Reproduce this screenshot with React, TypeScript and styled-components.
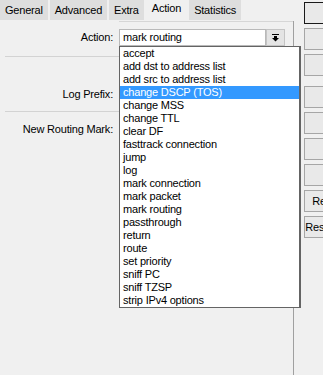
import React from 'react'
import styled, { createGlobalStyle } from 'styled-components'

const tabs = ['General', 'Advanced', 'Extra', 'Action', 'Statistics']
const activeTab = 'Action'

const actions = [
  'accept',
  'add dst to address list',
  'add src to address list',
  'change DSCP (TOS)',
  'change MSS',
  'change TTL',
  'clear DF',
  'fasttrack connection',
  'jump',
  'log',
  'mark connection',
  'mark packet',
  'mark routing',
  'passthrough',
  'return',
  'route',
  'set priority',
  'sniff PC',
  'sniff TZSP',
  'strip IPv4 options',
]
const hovered = 3

const buttons = [
  { label: 'OK', primary: true },
  { label: 'Cancel' },
  { label: 'Apply' },
  { label: 'Disable', spaced: true },
  { label: 'Comment' },
  { label: 'Copy' },
  { label: 'Remove' },
  { label: 'Reset Counters' },
  { label: 'Reset All Counters' },
]

const GlobalStyle = createGlobalStyle`
  html, body {
    margin: 0;
    padding: 0;
    background: #f0f0f0;
  }
  body {
    font-family: "Liberation Sans", Arial, sans-serif;
    font-size: 11px;
    letter-spacing: -0.2px;
    color: #000;
  }
`

const Window = styled.div`
  display: flex;
  width: 323px;
  height: 375px;
  overflow: hidden;
  background: #f0f0f0;
`

const Main = styled.div`
  display: flex;
  flex-direction: column;
  width: 294px;
  flex-shrink: 0;
`

const TabBar = styled.div`
  display: flex;
  gap: 2px;
  height: 20px;
`

const Tab = styled.div<{ $active?: boolean }>`
  display: flex;
  align-items: center;
  padding: ${p => (p.$active ? '0 6px 4px' : '0 5px')};
  background: ${p => (p.$active ? '#f0f0f0' : '#dedede')};
  white-space: nowrap;
`

const FormPanel = styled.div`
  flex: 1;
  margin-top: 1px;
  border-right: 1px solid #a0a0a0;
  display: flex;
  flex-direction: column;
`

const FieldRow = styled.div<{ $top: number }>`
  display: grid;
  grid-template-columns: 119px 1fr;
  align-items: end;
  margin-top: ${p => p.$top}px;
`

const Label = styled.div`
  height: 17px;
  line-height: 17px;
  text-align: right;
  padding-right: 6px;
  white-space: nowrap;
`

const ValueFrame = styled.div`
  border-top: 1px solid #d6d6d6;
  padding-top: 7px;
`

const Separator = styled.div<{ $top: number }>`
  margin: ${p => p.$top}px 0 0 5px;
  height: 1px;
  background: #d3d3d3;
`

const Combo = styled.div`
  position: relative;
  display: flex;
  height: 17px;
`

const ComboInput = styled.div`
  box-sizing: border-box;
  width: 147px;
  height: 17px;
  line-height: 15px;
  padding-left: 3px;
  background: #fff;
  border: 1px solid #b9b9b9;
  white-space: nowrap;
`

const ComboButton = styled.div`
  box-sizing: border-box;
  width: 19px;
  height: 17px;
  display: flex;
  align-items: center;
  justify-content: center;
  background: #e4e4e4;
  border: 1px solid #c4c4c4;
`

const TextInput = styled.div`
  box-sizing: border-box;
  width: 166px;
  height: 17px;
  background: #fff;
  border: 1px solid #b9b9b9;
`

const CheckLine = styled.label`
  display: flex;
  align-items: center;
  gap: 4px;
  height: 17px;
`

const CheckBox = styled.span`
  box-sizing: border-box;
  width: 13px;
  height: 13px;
  background: #fff;
  border: 1px solid #333;
`

const DropList = styled.ul`
  position: absolute;
  top: 17px;
  left: 0;
  z-index: 10;
  box-sizing: border-box;
  width: 182px;
  margin: 0;
  padding: 0;
  list-style: none;
  background: #fff;
  border: 1px solid #646464;
  border-right-width: 2px;
`

const DropItem = styled.li<{ $hot?: boolean }>`
  height: 13px;
  line-height: 13px;
  padding-left: 3px;
  white-space: nowrap;
  background: ${p => (p.$hot ? '#3399ff' : 'transparent')};
  color: ${p => (p.$hot ? '#fff' : '#000')};
`

const ButtonColumn = styled.div`
  display: flex;
  flex-direction: column;
  gap: 4px;
  margin-left: 10px;
  padding-top: 2px;
`

const SideButton = styled.div<{ $primary?: boolean; $spaced?: boolean }>`
  box-sizing: border-box;
  flex-shrink: 0;
  width: 90px;
  height: 22px;
  display: flex;
  align-items: center;
  justify-content: center;
  margin-top: ${p => (p.$spaced ? 6 : 0)}px;
  background: #e9e9e9;
  border: 1px solid ${p => (p.$primary ? '#1a1a1a' : '#a6a6a6')};
  white-space: nowrap;
`

const DropArrow = () => (
  <svg width="7" height="8" viewBox="0 0 7 8">
    <rect x="0" y="0" width="7" height="1" fill="#000" />
    <rect x="2" y="2" width="3" height="2" fill="#000" />
    <path d="M0 4 H7 L3.5 7.5 Z" fill="#000" />
  </svg>
)

export default function App() {
  return (
    <Window>
      <GlobalStyle />
      <Main>
        <TabBar>
          {tabs.map(t => (
            <Tab key={t} $active={t === activeTab}>
              {t}
            </Tab>
          ))}
        </TabBar>
        <FormPanel>
          <FieldRow $top={0}>
            <Label>Action:</Label>
            <ValueFrame>
              <Combo>
                <ComboInput>mark routing</ComboInput>
                <ComboButton>
                  <DropArrow />
                </ComboButton>
                <DropList>
                  {actions.map((a, i) => (
                    <DropItem key={a} $hot={i === hovered}>
                      {a}
                    </DropItem>
                  ))}
                </DropList>
              </Combo>
            </ValueFrame>
          </FieldRow>
          <Separator $top={10} />
          <FieldRow $top={5}>
            <Label />
            <CheckLine>
              <CheckBox />
              Log
            </CheckLine>
          </FieldRow>
          <FieldRow $top={7}>
            <Label>Log Prefix:</Label>
            <TextInput />
          </FieldRow>
          <Separator $top={8} />
          <FieldRow $top={9}>
            <Label>New Routing Mark:</Label>
            <TextInput />
          </FieldRow>
          <FieldRow $top={7}>
            <Label />
            <CheckLine>
              <CheckBox />
              Passthrough
            </CheckLine>
          </FieldRow>
        </FormPanel>
      </Main>
      <ButtonColumn>
        {buttons.map(b => (
          <SideButton key={b.label} $primary={b.primary} $spaced={b.spaced}>
            {b.label}
          </SideButton>
        ))}
      </ButtonColumn>
    </Window>
  )
}
